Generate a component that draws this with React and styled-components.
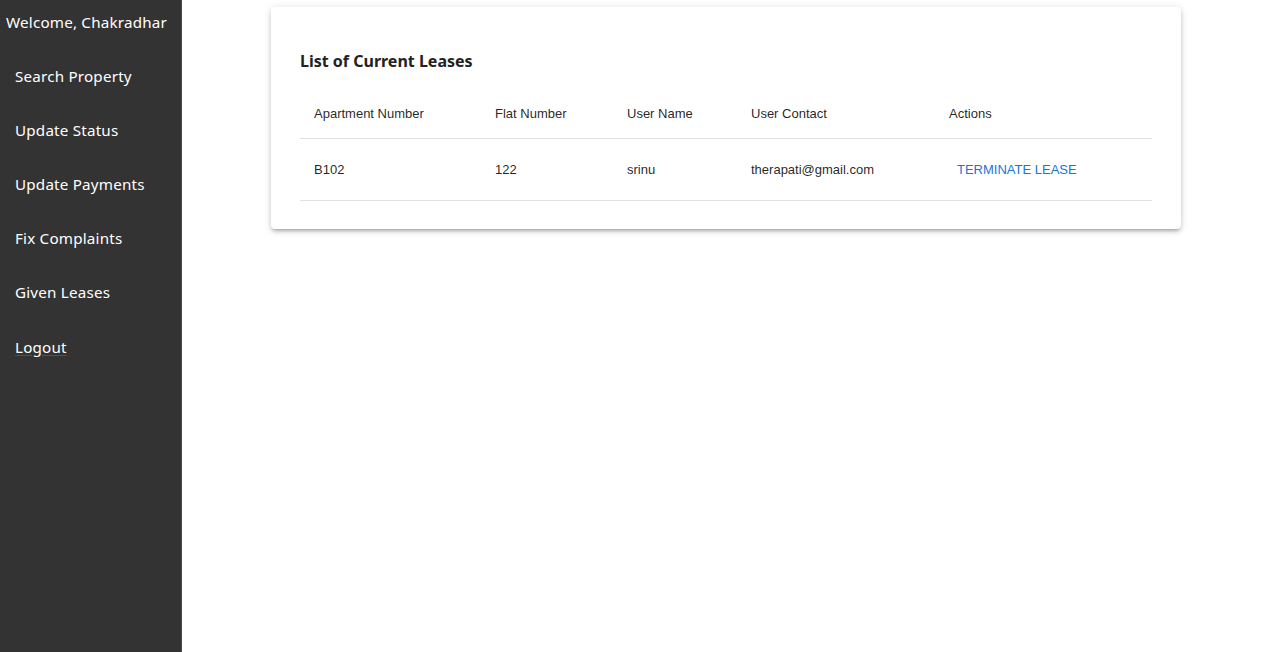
import styled, { createGlobalStyle } from "styled-components";

// sidebar links
const menuItems = [
  "Search Property",
  "Update Status",
  "Update Payments",
  "Fix Complaints",
  "Given Leases",
];

// lease rows
const leases = [
  {
    apartment: "B102",
    flat: "122",
    user: "srinu",
    contact: "therapati@gmail.com",
  },
];

const App = () => {
  return (
    <>
      <GlobalStyle />
      <Layout>
        <Sidebar>
          <Welcome>Welcome, Chakradhar</Welcome>
          {menuItems.map((item) => (
            <MenuItem key={item}>{item}</MenuItem>
          ))}
          <MenuItem>
            <LogoutLink href="#">Logout</LogoutLink>
          </MenuItem>
        </Sidebar>
        <Main>
          <Card>
            <Title>List of Current Leases</Title>
            <Table>
              <thead>
                <tr>
                  <HeadCell width="181px">Apartment Number</HeadCell>
                  <HeadCell width="132px">Flat Number</HeadCell>
                  <HeadCell width="124px">User Name</HeadCell>
                  <HeadCell width="198px">User Contact</HeadCell>
                  <HeadCell>Actions</HeadCell>
                </tr>
              </thead>
              <tbody>
                {leases.map((lease) => (
                  <tr key={lease.apartment}>
                    <Cell>{lease.apartment}</Cell>
                    <Cell>{lease.flat}</Cell>
                    <Cell>{lease.user}</Cell>
                    <Cell>{lease.contact}</Cell>
                    <Cell>
                      <TextButton>Terminate Lease</TextButton>
                    </Cell>
                  </tr>
                ))}
              </tbody>
            </Table>
          </Card>
        </Main>
      </Layout>
    </>
  );
};

// styled components

const GlobalStyle = createGlobalStyle`
  body {
    margin: 0;
    background: #ffffff;
    font-family: "Open Sans", "Noto Sans", sans-serif;
  }
`;

const Layout = styled.div`
  display: flex;
  min-height: 652px;
`;

const Sidebar = styled.nav`
  width: 182px;
  flex-shrink: 0;
  background-color: #333333;
  border-right: 1px solid #4a4a4a;
  box-sizing: border-box;
  padding-top: 10px;
  display: flex;
  flex-direction: column;
  gap: 30.1px;
`;

const Welcome = styled.div`
  color: #ffffff;
  font-family: "Noto Sans", sans-serif;
  font-size: 15.2px;
  line-height: 24px;
  padding-left: 6px;
  letter-spacing: 0.2px;
`;

const MenuItem = styled.div`
  color: #ffffff;
  font-family: "Noto Sans", sans-serif;
  font-size: 15.2px;
  line-height: 24px;
  padding-left: 15px;
  letter-spacing: 0.2px;
`;

const LogoutLink = styled.a`
  color: #ffffff;
  text-decoration: underline;
  text-decoration-color: #6236c0;
  text-underline-offset: 2px;
`;

const Main = styled.main`
  flex: 1;
  padding: 7px 0 0 89px;
`;

const Card = styled.div`
  width: 910px;
  box-sizing: border-box;
  background: #ffffff;
  border-radius: 4px;
  padding: 40px 29px 28px;
  box-shadow: 0px 3px 3px -2px rgba(0, 0, 0, 0.2),
    0px 3px 4px 0px rgba(0, 0, 0, 0.14), 0px 1px 8px 0px rgba(0, 0, 0, 0.12);
`;

const Title = styled.h2`
  margin: 0 0 13px;
  font-family: "Noto Sans", sans-serif;
  font-size: 16px;
  line-height: 28px;
  font-weight: 700;
  color: #222222;
`;

const Table = styled.table`
  width: 100%;
  table-layout: fixed;
  border-collapse: collapse;
  font-family: "Liberation Sans", Arial, sans-serif;
  font-size: 13px;
  color: rgba(0, 0, 0, 0.87);
`;

const HeadCell = styled.th`
  width: ${(p) => p.width || "auto"};
  box-sizing: border-box;
  text-align: left;
  font-weight: 400;
  height: 50px;
  padding: 2px 0 0 14px;
  border-bottom: 1px solid #e0e0e0;
`;

const Cell = styled.td`
  height: 61px;
  padding: 0 0 0 14px;
  border-bottom: 1px solid #e0e0e0;
`;

const TextButton = styled.button`
  background: none;
  border: none;
  padding: 6px 8px;
  font-family: "Liberation Sans", Arial, sans-serif;
  font-size: 13px;
  text-transform: uppercase;
  letter-spacing: 0;
  color: #1976d2;
  cursor: pointer;
`;

export default App;
